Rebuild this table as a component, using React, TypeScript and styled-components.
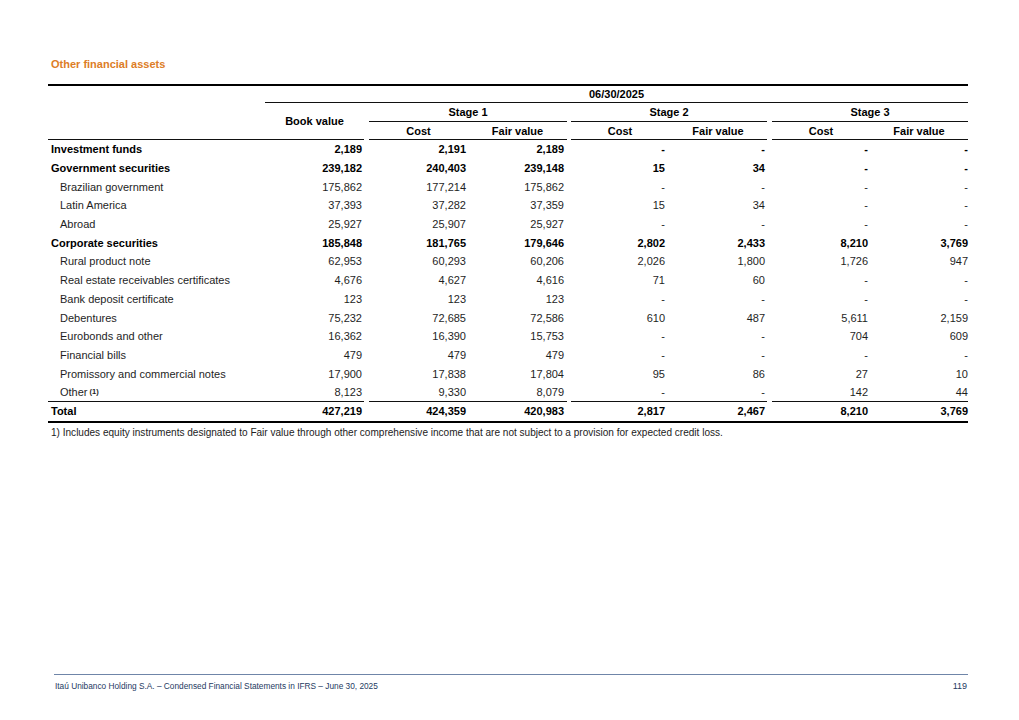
import React from 'react';
import styled, { createGlobalStyle } from 'styled-components';

const GlobalStyle = createGlobalStyle`
  html, body { margin: 0; padding: 0; background: #fff; }
  * { box-sizing: border-box; }
  body { font-family: "Liberation Sans", Arial, sans-serif; color: #222; }
`;

const COLS = '217px 99px 104px 99px 102px 98px 103px 98px';
const GAPS = [0, 0, 5, 0, 4, 0, 5, 0];
const PAD = [0, 2, 2, 3, 4, 2, 2, 0];

const Page = styled.div`
  width: 1019px;
  height: 720px;
  padding: 57px 51px 29px 48px;
  display: flex;
  flex-direction: column;
`;

const Title = styled.h1`
  margin: 0 0 13px 3px;
  font-size: 11px;
  line-height: 14px;
  font-weight: bold;
  color: #dd7d26;
`;

const Header = styled.div`
  display: grid;
  grid-template-columns: ${COLS};
  grid-template-rows: 17px 19px 18px;
  border-top: 2px solid #000;
`;

const HeadCell = styled.div<{ $col: string; $row: string; $gap?: number; $line?: boolean }>`
  grid-column: ${(p) => p.$col};
  grid-row: ${(p) => p.$row};
  margin-left: ${(p) => p.$gap ?? 0}px;
  border-bottom: ${(p) => (p.$line === false ? 'none' : '1px solid #111')};
  display: flex;
  align-items: center;
  justify-content: center;
  font-size: 11px;
  font-weight: bold;
  color: #000;
`;

type RowKind = 'normal' | 'rule' | 'total';

const Row = styled.div<{ $kind: RowKind }>`
  display: grid;
  grid-template-columns: ${COLS};
  height: ${(p) => (p.$kind === 'total' ? '21px' : '18.7px')};
  border-bottom: ${(p) => (p.$kind === 'total' ? '2px solid #000' : 'none')};
`;

const Cell = styled.div<{ $gap: number; $pad: number; $bold?: boolean; $indent?: boolean; $label?: boolean; $rule?: boolean }>`
  margin-left: ${(p) => p.$gap}px;
  padding-right: ${(p) => p.$pad}px;
  padding-left: ${(p) => (p.$label ? (p.$indent ? 12 : 3) : 0)}px;
  display: flex;
  align-items: center;
  justify-content: ${(p) => (p.$label ? 'flex-start' : 'flex-end')};
  font-size: 11px;
  white-space: nowrap;
  font-weight: ${(p) => (p.$bold ? 'bold' : 'normal')};
  color: ${(p) => (p.$bold ? '#000' : '#1e1e1e')};
  border-bottom: ${(p) => (p.$rule ? '1px solid #111' : 'none')};
`;

const Sup = styled.sup`
  font-size: 7.5px;
  font-weight: bold;
  vertical-align: 5px;
  line-height: 0;
  margin-left: 2px;
`;

const Footnote = styled.p`
  margin: 3px 0 0 3px;
  font-size: 10.05px;
  line-height: 13px;
  color: #222;
`;

const Footer = styled.footer`
  margin-top: auto;
  margin-left: 6px;
  border-top: 1px solid #6f85a8;
  padding-top: 6px;
  display: flex;
  justify-content: space-between;
  align-items: center;
  color: #253a62;
`;

const FooterText = styled.span`
  font-size: 8.3px;
  line-height: 10px;
  padding-left: 1px;
`;

const PageNum = styled.span`
  font-size: 9px;
  line-height: 10px;
  padding-right: 1px;
`;

type DataRow = { label: string; bold?: boolean; sup?: string; values: string[] };

const rows: DataRow[] = [
  { label: 'Investment funds', bold: true, values: ['2,189', '2,191', '2,189', '-', '-', '-', '-'] },
  { label: 'Government securities', bold: true, values: ['239,182', '240,403', '239,148', '15', '34', '-', '-'] },
  { label: 'Brazilian government', values: ['175,862', '177,214', '175,862', '-', '-', '-', '-'] },
  { label: 'Latin America', values: ['37,393', '37,282', '37,359', '15', '34', '-', '-'] },
  { label: 'Abroad', values: ['25,927', '25,907', '25,927', '-', '-', '-', '-'] },
  { label: 'Corporate securities', bold: true, values: ['185,848', '181,765', '179,646', '2,802', '2,433', '8,210', '3,769'] },
  { label: 'Rural product note', values: ['62,953', '60,293', '60,206', '2,026', '1,800', '1,726', '947'] },
  { label: 'Real estate receivables certificates', values: ['4,676', '4,627', '4,616', '71', '60', '-', '-'] },
  { label: 'Bank deposit certificate', values: ['123', '123', '123', '-', '-', '-', '-'] },
  { label: 'Debentures', values: ['75,232', '72,685', '72,586', '610', '487', '5,611', '2,159'] },
  { label: 'Eurobonds and other', values: ['16,362', '16,390', '15,753', '-', '-', '704', '609'] },
  { label: 'Financial bills', values: ['479', '479', '479', '-', '-', '-', '-'] },
  { label: 'Promissory and commercial notes', values: ['17,900', '17,838', '17,804', '95', '86', '27', '10'] },
  { label: 'Other', sup: '(1)', values: ['8,123', '9,330', '8,079', '-', '-', '142', '44'] },
];

const total: DataRow = {
  label: 'Total',
  bold: true,
  values: ['427,219', '424,359', '420,983', '2,817', '2,467', '8,210', '3,769'],
};

function TableRow({ row, kind }: { row: DataRow; kind: RowKind }) {
  const rule = kind === 'rule';
  const gapFor = (i: number) => (kind === 'total' ? 0 : GAPS[i]);
  return (
    <Row $kind={kind}>
      <Cell $gap={0} $pad={0} $label $bold={row.bold} $indent={!row.bold} $rule={rule}>
        {row.label}
        {row.sup && <Sup>{row.sup}</Sup>}
      </Cell>
      {row.values.map((v, i) => (
        <Cell key={i} $gap={gapFor(i + 1)} $pad={PAD[i + 1]} $bold={row.bold} $rule={rule}>
          {v}
        </Cell>
      ))}
    </Row>
  );
}

export default function App() {
  return (
    <>
      <GlobalStyle />
      <Page>
        <Title>Other financial assets</Title>
        <Header>
          <HeadCell $col="1" $row="1 / 4" />
          <HeadCell $col="2 / 9" $row="1">06/30/2025</HeadCell>
          <HeadCell $col="2" $row="2 / 4">Book value</HeadCell>
          <HeadCell $col="3 / 5" $row="2" $gap={5}>Stage 1</HeadCell>
          <HeadCell $col="5 / 7" $row="2" $gap={4}>Stage 2</HeadCell>
          <HeadCell $col="7 / 9" $row="2" $gap={5}>Stage 3</HeadCell>
          <HeadCell $col="3" $row="3" $gap={5}>Cost</HeadCell>
          <HeadCell $col="4" $row="3">Fair value</HeadCell>
          <HeadCell $col="5" $row="3" $gap={4}>Cost</HeadCell>
          <HeadCell $col="6" $row="3">Fair value</HeadCell>
          <HeadCell $col="7" $row="3" $gap={5}>Cost</HeadCell>
          <HeadCell $col="8" $row="3">Fair value</HeadCell>
        </Header>
        {rows.map((r, i) => (
          <TableRow key={r.label} row={r} kind={i === rows.length - 1 ? 'rule' : 'normal'} />
        ))}
        <TableRow row={total} kind="total" />
        <Footnote>
          1) Includes equity instruments designated to Fair value through other comprehensive income that are not subject to a provision for expected credit loss.
        </Footnote>
        <Footer>
          <FooterText>Itaú Unibanco Holding S.A. – Condensed Financial Statements in IFRS – June 30, 2025</FooterText>
          <PageNum>119</PageNum>
        </Footer>
      </Page>
    </>
  );
}
